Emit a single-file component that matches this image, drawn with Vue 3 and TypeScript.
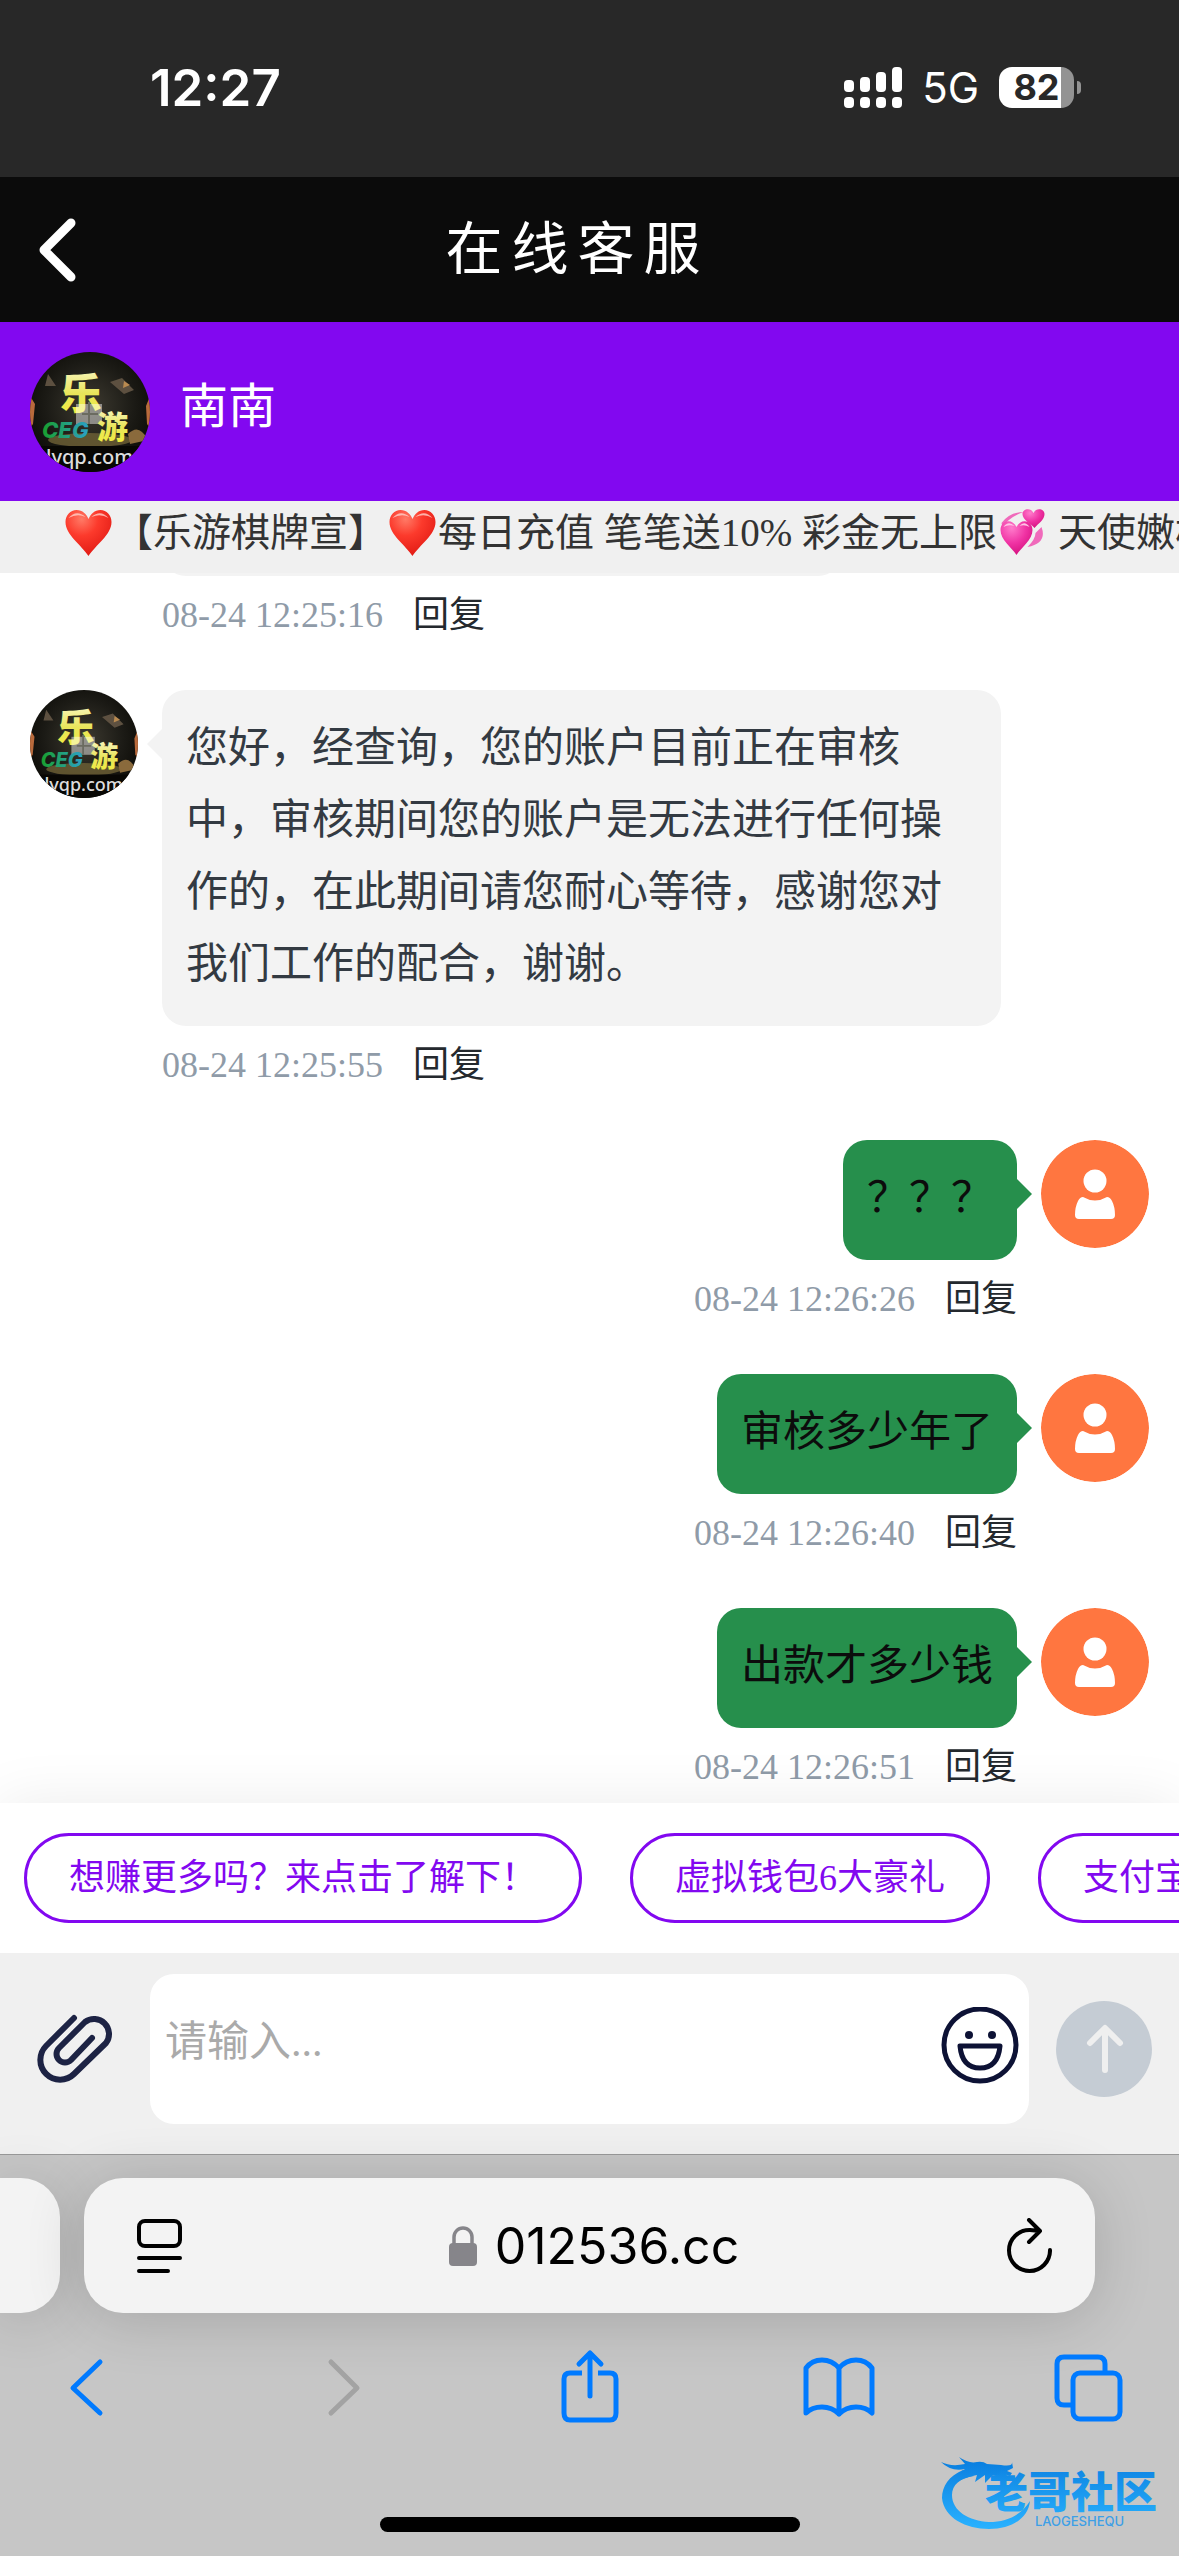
<script setup lang="ts">
interface Message {
  id: number
  mine: boolean
  text: string
  time: string
}

const messages: Message[] = [
  { id: 1, mine: false, text: '', time: '08-24 12:25:16' },
  {
    id: 2,
    mine: false,
    text: '您好，经查询，您的账户目前正在审核中，审核期间您的账户是无法进行任何操作的，在此期间请您耐心等待，感谢您对我们工作的配合，谢谢。',
    time: '08-24 12:25:55',
  },
  { id: 3, mine: true, text: '？？？', time: '08-24 12:26:26' },
  { id: 4, mine: true, text: '审核多少年了', time: '08-24 12:26:40' },
  { id: 5, mine: true, text: '出款才多少钱', time: '08-24 12:26:51' },
]

const quickReplies: string[] = ['想赚更多吗？来点击了解下！', '虚拟钱包6大豪礼', '支付宝']

const signalBars = [
  { x: 0, top: 13 },
  { x: 16, top: 10 },
  { x: 32, top: 5 },
  { x: 48, top: 0 },
]
</script>

<template>
  <div class="page">
    <!-- shared drawings -->
    <svg class="defs" width="0" height="0" aria-hidden="true">
      <defs>
        <linearGradient id="gold" x1="0" y1="0" x2="0" y2="1">
          <stop offset="0" stop-color="#fdfbe0" />
          <stop offset="0.55" stop-color="#e9e55a" />
          <stop offset="1" stop-color="#f2ef3a" />
        </linearGradient>
        <linearGradient id="ceg" x1="0" y1="0" x2="1" y2="0">
          <stop offset="0" stop-color="#18a02c" />
          <stop offset="1" stop-color="#2ba0c8" />
        </linearGradient>
        <radialGradient id="stage" cx="0.5" cy="0.45" r="0.6">
          <stop offset="0" stop-color="#3d3a30" />
          <stop offset="0.6" stop-color="#1c1b16" />
          <stop offset="1" stop-color="#0a0905" />
        </radialGradient>
        <radialGradient id="heartFill" cx="0.35" cy="0.2" r="0.9">
          <stop offset="0" stop-color="#ff7a66" />
          <stop offset="0.4" stop-color="#fc3a2c" />
          <stop offset="1" stop-color="#dd1510" />
        </radialGradient>
        <radialGradient id="pinkFill" cx="0.35" cy="0.2" r="0.9">
          <stop offset="0" stop-color="#ff7ccb" />
          <stop offset="0.5" stop-color="#f033a4" />
          <stop offset="1" stop-color="#cf0a78" />
        </radialGradient>
        <symbol id="agent" viewBox="0 0 120 120">
          <rect width="120" height="120" fill="url(#stage)" />
          <path d="M18 22 L26 34 L15 34Z M80 30 L92 26 L104 38 L94 42Z" fill="#5d5040" />
          <path d="M94 29 L100 33 L93 36Z" fill="#b98a50" />
          <ellipse cx="60" cy="88" rx="42" ry="7" fill="#6f6136" opacity="0.8" />
          <path d="M98 82 Q106 74 112 80 T118 88 L100 92Z" fill="#8a6a3c" />
          <path d="M0 44 L5 52 L3 72 L0 76Z M120 44 L116 54 L117 72 L120 76Z" fill="#b96a3c" />
          <rect y="94" width="120" height="26" fill="#080704" />
          <text x="30" y="57" font-size="42" font-weight="900" fill="url(#gold)" font-family="'Noto Sans CJK SC', sans-serif">乐</text>
          <rect x="46" y="52" width="26" height="20" fill="#ffffff" opacity="0.45" />
          <path d="M59 50 V72 M52 62 H68" stroke="#6b6b60" stroke-width="2" />
          <text x="67" y="86" font-size="31" font-weight="900" fill="url(#gold)" font-family="'Noto Sans CJK SC', sans-serif">游</text>
          <text x="12" y="86" font-size="22" font-weight="800" font-style="italic" fill="url(#ceg)" font-family="Inter, sans-serif">CEG</text>
          <text x="16" y="112" font-size="20" font-weight="500" fill="#dddddd" font-family="'Noto Sans', sans-serif">lyqp.com</text>
        </symbol>
        <symbol id="heart" viewBox="0 0 50 48">
          <path d="M25 47 C18 36 2 26 2 13 C2 6 7 1 13 1 C19 1 23 5 25 10 C27 5 31 1 37 1 C43 1 48 6 48 13 C48 26 32 36 25 47Z" fill="url(#heartFill)" />
          <path d="M5 9 Q13 0 22 8 Q14 4 5 9Z M28 8 Q37 0 45 9 Q37 4 28 8Z" fill="#ffd0c8" opacity="0.8" />
        </symbol>
      </defs>
    </svg>

    <div class="status">
      <span class="clock">12:27</span>
      <div class="indicators">
        <svg width="58" height="41" viewBox="0 0 58 41" fill="#fff" aria-hidden="true">
          <g v-for="bar in signalBars" :key="bar.x">
            <rect :x="bar.x" :y="bar.top" width="10" :height="25 - bar.top" rx="4" />
            <rect :x="bar.x" y="30" width="10" height="11" rx="4" />
          </g>
        </svg>
        <span class="network">5G</span>
        <div class="battery">
          <span class="level">82</span>
        </div>
      </div>
    </div>

    <header class="titlebar">
      <button class="back" aria-label="返回">
        <svg width="48" height="72" viewBox="0 0 48 72" fill="none" stroke="#fff" stroke-width="9" stroke-linecap="round" stroke-linejoin="round">
          <path d="M38 9 L11 36 L38 63" />
        </svg>
      </button>
      <h1>在线客服</h1>
    </header>

    <section class="agent">
      <svg class="agent-photo" aria-hidden="true"><use href="#agent" /></svg>
      <span class="agent-name">南南</span>
    </section>

    <div class="notice">
      <svg class="emoji" viewBox="0 0 50 48" aria-hidden="true"><use href="#heart" /></svg>
      <span>【乐游棋牌宣】</span>
      <svg class="emoji" viewBox="0 0 50 48" aria-hidden="true"><use href="#heart" /></svg>
      <span>每日充值 笔笔送10% 彩金无上限</span>
      <svg class="emoji" viewBox="0 0 50 48" aria-hidden="true">
        <path d="M4 14 Q12 3 26 3 Q12 8 5 18Z M44 18 Q50 34 30 38 Q38 30 38 24Z" fill="#f06abb" />
        <path d="M37 19 C33 14 25 11 25 5 C25 0 33 -2 36 4 C39 -2 47 0 47 5 C47 11 41 14 37 19Z" fill="url(#pinkFill)" />
        <path d="M19 46 C14 38 3 31 3 21 C3 11 15 9 19 18 C23 9 35 11 35 21 C35 31 24 38 19 46Z" fill="url(#pinkFill)" />
        <path d="M6 18 Q11 11 17 17 Q11 15 6 18Z M22 17 Q27 11 32 18 Q27 15 22 17Z" fill="#ffc4e6" />
      </svg>
      <span class="notice-tail">天使嫩模</span>
    </div>

    <main class="chat">
      <article v-for="m in messages" :key="m.id" class="message" :class="{ mine: m.mine }">
        <svg v-if="m.mine" class="avatar" viewBox="0 0 108 108" aria-hidden="true">
          <circle cx="54" cy="54" r="54" fill="#ff7640" />
          <circle cx="54" cy="41" r="11.5" fill="#fff" />
          <path d="M42 57 Q54 64 66 57 Q69 57 71 61 Q74 67 74 75 Q74 79 70 79 H38 Q34 79 34 75 Q34 67 37 61 Q39 57 42 57Z" fill="#fff" />
        </svg>
        <svg v-else class="avatar" aria-hidden="true"><use href="#agent" /></svg>
        <div class="body">
          <div class="bubble" :class="{ blank: !m.text }">{{ m.text }}</div>
          <div class="meta">
            <time>{{ m.time }}</time>
            <button class="reply">回复</button>
          </div>
        </div>
      </article>
    </main>

    <nav class="quick">
      <button v-for="q in quickReplies" :key="q" class="pill">{{ q }}</button>
    </nav>

    <form class="composer" @submit.prevent>
      <button type="button" class="attach" aria-label="附件">
        <svg width="90" height="90" viewBox="0 0 90 90" fill="none" stroke="#1d2344" stroke-width="6" stroke-linecap="round" stroke-linejoin="round">
          <path d="M44 14 L16 42 A19.8 19.8 0 0 0 44 70 L76 39 A15 15 0 0 0 55 18 L29 44 A8.4 8.4 0 0 0 41 56 L62 34" />
        </svg>
      </button>
      <div class="field">
        <textarea aria-label="消息" placeholder="请输入..."></textarea>
        <button type="button" class="smile" aria-label="表情">
          <svg width="78" height="84" viewBox="0 0 78 84" fill="none" stroke="#0d1235" stroke-width="5" stroke-linejoin="round">
            <circle cx="39" cy="38" r="36" />
            <path d="M19 39 H59 Q57 61 39 61 Q21 61 19 39Z" />
            <circle cx="28" cy="28" r="4" fill="#0d1235" stroke="none" />
            <circle cx="51" cy="28" r="4" fill="#0d1235" stroke="none" />
          </svg>
        </button>
      </div>
      <button type="submit" class="send" aria-label="发送">
        <svg width="96" height="96" viewBox="0 0 96 96" fill="none" stroke="#efefef" stroke-width="6" stroke-linecap="round" stroke-linejoin="round">
          <circle cx="48" cy="48" r="48" fill="#c5ccd4" stroke="none" />
          <path d="M34 42 L49 27 L64 42 M49 28 V69" />
        </svg>
      </button>
    </form>

    <footer class="browser">
      <div class="address-row">
        <div class="neighbour"></div>
        <div class="address">
          <button aria-label="页面设置">
            <svg width="46" height="56" viewBox="0 0 46 56" fill="none" stroke="#000" stroke-width="4" stroke-linecap="round">
              <rect x="3" y="3" width="41" height="25" rx="6" />
              <path d="M3 40 H44 M3 53 H32" />
            </svg>
          </button>
          <button class="url">
            <svg width="28" height="40" viewBox="0 0 28 40" aria-hidden="true">
              <rect x="0" y="17" width="28" height="23" rx="4" fill="#86858a" />
              <path d="M5 18 V11 A9 9 0 0 1 23 11 V18" fill="none" stroke="#86858a" stroke-width="3.5" />
            </svg>
            <span>012536.cc</span>
          </button>
          <button aria-label="刷新">
            <svg width="46" height="56" viewBox="0 0 46 56" fill="none" stroke="#000" stroke-width="4" stroke-linecap="round" stroke-linejoin="round">
              <path d="M44 32 A20.5 20.5 0 1 1 24 12 L34 13 M23 2 L34 13 L23 24" />
            </svg>
          </button>
        </div>
      </div>
      <div class="toolbar">
        <button aria-label="后退">
          <svg viewBox="0 0 90 90" stroke="#007aff"><path d="M55 20 L28 46 L55 71" /></svg>
        </button>
        <button aria-label="前进">
          <svg viewBox="0 0 90 90" stroke="#a3a3a3"><path d="M36 20 L62 46 L36 71" /></svg>
        </button>
        <button aria-label="分享">
          <svg viewBox="0 0 90 90" stroke="#007aff">
            <path d="M37 31 H25 Q19 31 19 37 V71 Q19 78 25 78 H65 Q71 78 71 71 V37 Q71 31 65 31 H53" stroke-linecap="butt" />
            <path d="M45 54 V11 M34 22 L45 11 L56 22" />
          </svg>
        </button>
        <button aria-label="书签">
          <svg viewBox="0 0 90 90" stroke="#007aff">
            <path d="M45 26 Q38 18 28 18 Q18 18 12 26 V71 Q18 65 28 65 Q38 65 45 72 Q52 65 62 65 Q72 65 78 71 V26 Q72 18 62 18 Q52 18 45 26 V72" />
          </svg>
        </button>
        <button aria-label="标签页">
          <svg viewBox="0 0 90 90" stroke="#007aff">
            <rect x="29" y="31" width="47" height="46" rx="7" />
            <path d="M29 63 H20 Q13 63 13 56 V22 Q13 15 20 15 H54 Q61 15 61 22 V31" stroke-linecap="butt" />
          </svg>
        </button>
      </div>
      <div class="home"></div>

      <svg class="brand" width="228" height="84" viewBox="0 0 228 84" role="img" aria-label="老哥社区">
        <defs>
          <linearGradient id="sea" gradientUnits="userSpaceOnUse" x1="0" y1="10" x2="0" y2="78">
            <stop offset="0" stop-color="#0a7fe0" />
            <stop offset="1" stop-color="#2ab2ff" />
          </linearGradient>
          <linearGradient id="ink" x1="0" y1="0" x2="0" y2="1">
            <stop offset="0" stop-color="#0c7fe0" />
            <stop offset="1" stop-color="#25adfb" />
          </linearGradient>
        </defs>
        <path fill="url(#sea)" d="M24 19 C10 25 3 35 3 47 C5 67 27 78 50 78 C72 78 89 68 91 50 C82 64 68 71 50 71 C30 70 13 60 13 44 C13 34 21 27 35 25Z" />
        <path fill="url(#sea)" d="M2 11 Q12 16 26 13 L20 6 Q30 13 38 11 Q44 10 48 13 L62 14 Q74 16 73 11 L74 17 L68 20 L73 22 L71 25 L62 22 L68 29 L54 24 L46 32 L46 24 L36 31 L38 24 Q24 26 14 34 Q16 24 26 18 Q12 21 2 11Z" />
        <text x="46" y="57" font-size="43" font-weight="900" fill="url(#ink)" font-family="'Noto Sans CJK SC', sans-serif">老哥社区</text>
        <text x="96" y="75" font-size="13" font-weight="500" fill="#3d9fe6" font-family="Inter, sans-serif">LAOGESHEQU</text>
      </svg>
    </footer>
  </div>
</template>

<style>
body {
  margin: 0;
}
</style>

<style scoped>
.page {
  display: flex;
  flex-direction: column;
  height: 100vh;
  overflow: hidden;
  background: #fff;
  font-family: 'Liberation Serif', 'Noto Sans CJK SC', sans-serif;
}

.defs {
  position: absolute;
}

button {
  display: block;
  padding: 0;
  border: 0;
  background: none;
  font: inherit;
  color: inherit;
}

svg {
  display: block;
  flex: none;
}

.status {
  display: flex;
  flex: none;
  align-items: center;
  justify-content: space-between;
  height: 177px;
  padding: 0 105px 2px 150px;
  box-sizing: border-box;
  background: #282828;
  color: #fff;
  font-family: Inter, sans-serif;
}

.clock {
  font-size: 51px;
  font-weight: 600;
}

.indicators {
  display: flex;
  align-items: center;
  gap: 20px;
}

.network {
  font-size: 42px;
}

.battery {
  position: relative;
  width: 75px;
  height: 41px;
  border-radius: 13px;
  background: linear-gradient(90deg, #fff 62px, #939393 62px);
}

.battery::after {
  content: '';
  position: absolute;
  left: 78px;
  top: 14px;
  width: 4px;
  height: 13px;
  border-radius: 0 6px 6px 0;
  background: #939393;
}

.level {
  display: block;
  color: #282828;
  font-size: 36px;
  font-weight: 700;
  line-height: 41px;
  text-align: center;
}

.titlebar {
  display: grid;
  flex: none;
  grid-template-columns: 120px 1fr 144px;
  align-items: center;
  height: 145px;
  background: #0b0b0b;
  color: #fff;
}

.back {
  justify-self: start;
  margin-left: 33px;
}

h1 {
  margin: 0;
  font-size: 57px;
  font-weight: 400;
  letter-spacing: 9px;
  line-height: 75px;
  text-align: center;
}

.agent {
  display: flex;
  flex: none;
  align-items: center;
  gap: 30px;
  height: 179px;
  padding: 0 30px;
  background: #8208f0;
  color: #fff;
}

.agent-photo {
  width: 120px;
  height: 120px;
  border-radius: 50%;
}

.agent-name {
  padding-bottom: 9px;
  font-size: 48px;
  line-height: 60px;
}

.notice {
  display: flex;
  flex: none;
  height: 72px;
  padding-left: 63px;
  overflow: hidden;
  background: #f0f0f0;
  color: #333;
  font-size: 39px;
  line-height: 63px;
  white-space: nowrap;
}

.notice span {
  flex: none;
}

.notice .emoji {
  width: 51px;
  height: 48px;
  margin-top: 8px;
}

.notice .notice-tail {
  margin-left: 10px;
}

.chat {
  display: flex;
  flex: 1;
  flex-direction: column;
  justify-content: flex-end;
  gap: 48px;
  min-height: 0;
  padding: 0 30px 9px;
  overflow: hidden;
}

.message {
  display: flex;
  flex: none;
  gap: 24px;
}

.mine {
  flex-direction: row-reverse;
}

.avatar {
  width: 108px;
  height: 108px;
  border-radius: 50%;
}

.body {
  display: flex;
  flex-direction: column;
  align-items: flex-start;
  max-width: 75%;
}

.mine .body {
  align-items: flex-end;
}

.bubble {
  position: relative;
  padding: 22px 24px 26px;
  border-radius: 24px;
  background: #f3f3f3;
  color: #333a42;
  font-size: 42px;
  line-height: 72px;
}

.bubble::before {
  content: '';
  position: absolute;
  top: 39px;
  right: 100%;
  border: 15px solid transparent;
  border-left: 0;
  border-right-color: #f3f3f3;
}

.blank {
  width: 632px;
  height: 72px;
}

.mine .bubble {
  background: #268f4c;
  color: #0c0c0c;
}

.mine .bubble::before {
  right: auto;
  left: 100%;
  border: 15px solid transparent;
  border-right: 0;
  border-left-color: #268f4c;
}

.meta {
  display: flex;
  gap: 30px;
  margin-top: 12px;
  color: #8f9ba8;
  font-size: 36px;
  line-height: 54px;
}

.reply {
  color: #24292e;
}

.quick {
  position: relative;
  display: flex;
  flex: none;
  gap: 48px;
  padding: 30px 24px;
  overflow: hidden;
  background: #fff;
  box-shadow: 0 0 60px rgba(0, 0, 0, 0.08);
}

.pill {
  flex: none;
  height: 90px;
  padding: 0 42px;
  border: 3px solid #8208f0;
  border-radius: 45px;
  color: #8208f0;
  font-size: 36px;
  line-height: 84px;
}

.composer {
  position: relative;
  display: grid;
  flex: none;
  grid-template-columns: 93px 1fr 96px;
  align-items: center;
  column-gap: 27px;
  padding: 21px 27px 30px 30px;
  background: #f0f0f0;
}

.field {
  display: flex;
  align-items: center;
  height: 150px;
  padding-right: 10px;
  border-radius: 24px;
  background: #fff;
}

textarea {
  flex: 1;
  min-width: 0;
  height: 150px;
  margin: 0;
  padding: 38px 15px 0;
  box-sizing: border-box;
  border: 0;
  background: none;
  font: inherit;
  font-size: 42px;
  line-height: 60px;
  resize: none;
  outline: none;
}

textarea::placeholder {
  color: #aaa;
  opacity: 1;
}

.browser {
  position: relative;
  flex: none;
  padding: 23px 0 24px;
  border-top: 1px solid #999;
  background: #c6c6c6;
}

.address-row {
  display: flex;
  gap: 24px;
  padding-right: 84px;
}

.neighbour,
.address {
  height: 135px;
  background: #f3f3f3;
  box-shadow: 0 6px 60px rgba(0, 0, 0, 0.16);
}

.neighbour {
  width: 60px;
  border-radius: 0 39px 39px 0;
}

.address {
  display: flex;
  flex: 1;
  align-items: center;
  justify-content: space-between;
  padding: 0 43px 0 52px;
  border-radius: 39px;
}

.url {
  display: flex;
  align-items: center;
  gap: 18px;
  color: #000;
  font-family: Inter, sans-serif;
  font-size: 50px;
}

.toolbar {
  display: flex;
  justify-content: space-between;
  margin-top: 29px;
  padding: 0 45px;
}

.toolbar svg {
  width: 90px;
  height: 90px;
  fill: none;
  stroke-width: 5px;
  stroke-linecap: round;
  stroke-linejoin: round;
}

.home {
  width: 420px;
  height: 15px;
  margin: 85px auto 0;
  border-radius: 8px;
  background: #000;
}

.brand {
  position: absolute;
  right: 12px;
  bottom: 21px;
}
</style>
